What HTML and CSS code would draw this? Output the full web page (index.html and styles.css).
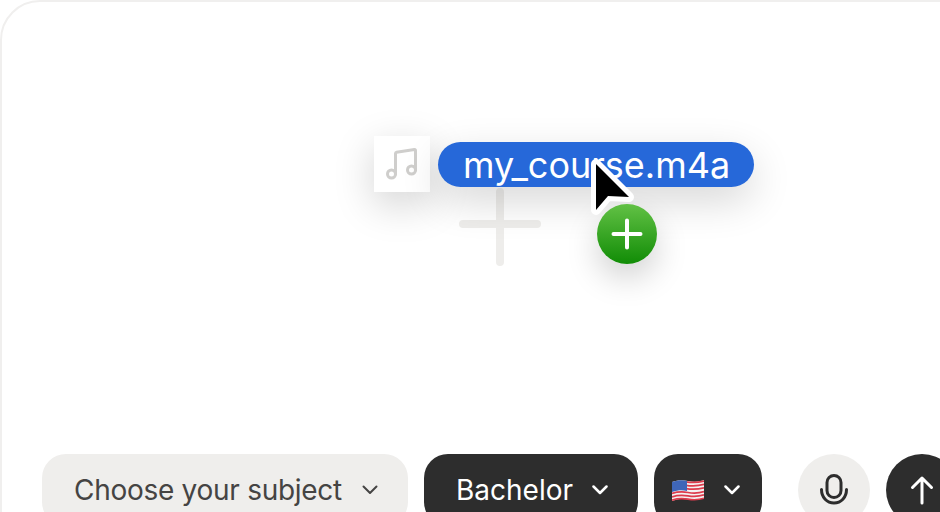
FILE: index.html
```html
<!DOCTYPE html>
<html lang="en">
<head>
	<meta charset="UTF-8">
	<meta name="viewport" content="width=device-width, initial-scale=1.0">
	<link rel="stylesheet" href="styles.css">
	<title>Course upload</title>
</head>
<body>
	<main class="card">
		<div class="toolbar">
			<button class="select select-light select-subject">Choose your subject
				<svg class="chevron" viewBox="0 0 16 10"><path d="M1.5 1.500 8 8l6.500-6.500"/></svg>
			</button>
			<button class="select select-dark select-level">Bachelor
				<svg class="chevron" viewBox="0 0 16 10"><path d="M1.5 1.500 8 8l6.500-6.500"/></svg>
			</button>
			<button class="select select-dark select-lang">
				<svg class="flag" viewBox="0 0 32 24">
					<path fill="#f4f1f1" d="M0 4c6-2 10-2 16-1s10 1 16-1v18c-6 2-10 2-16 1S6 21 0 23z"/>
					<path fill="none" stroke="#dd3b4c" stroke-width="1.700" d="M14 3.900c7 1 11 1 18-.9M14 7.300c7 1 11 1 18-.9M14 10.700c7 1 11 1 18-.9M0 15.500c6-2 10-2 16-1s10 1 16-1M0 18.900c6-2 10-2 16-1s10 1 16-1M0 22.200c6-2 10-2 16-1s10 1 16-1"/>
					<path fill="#3f66b8" d="M0 4c6-2 10-2 15-1.100v10C10 12 6 12 0 14z"/>
				</svg>
				<svg class="chevron" viewBox="0 0 16 10"><path d="M1.500 1.500 8 8l6.500-6.500"/></svg>
			</button>
			<button class="round round-light" aria-label="Record">
				<svg class="icon-mic" viewBox="0 0 28 32"><rect x="7" y="1.500" width="14" height="22" rx="7"/><path d="M1.500 15.500c0 8 5.500 13.500 12.500 13.500s12.500-5.500 12.500-13.500"/></svg>
			</button>
			<button class="round round-dark" aria-label="Send">
				<svg class="icon-up" viewBox="0 0 24 30"><path d="M12 28V3M2.500 12.500 12 3l9.500 9.500"/></svg>
			</button>
		</div>
	</main>

	<!-- drag preview floats above the card -->
	<svg class="drop-plus" viewBox="0 0 82 78"><path d="M4 36h74M41 4v70"/></svg>
	<div class="file-thumb">
		<svg viewBox="0 0 36 36"><circle cx="7.500" cy="28" r="4"/><circle cx="27.500" cy="24" r="4"/><path d="M11.500 28V7.500q0-1 1-1.200L30.500 3.600q1-.2 1 1V24"/></svg>
	</div>
	<div class="file-name">my_course.m4a</div>
	<div class="add-badge">
		<svg viewBox="0 0 32 32"><path d="M2.500 16h27M16 2.500v27"/></svg>
	</div>
	<svg class="cursor" viewBox="0 0 56 72"><path d="M11 12v46l12-14 21 1z"/></svg>
</body>
</html>
```

FILE: styles.css
```css
* {
	box-sizing: border-box;
}

body {
	margin: 0;
	height: 512px;
	overflow: hidden;
	background: #fff;
	font-family: Inter, "Liberation Sans", sans-serif;
}

button {
	border: none;
	font: inherit;
	cursor: pointer;
}

.card {
	display: flex;
	align-items: flex-start;
	width: 1100px;
	height: 620px;
	padding: 452px 0 0 40px;
	background: #fff;
	border: 2px solid #f0efee;
	border-radius: 40px;
}

.toolbar {
	display: flex;
	gap: 16px;
}

.select {
	display: flex;
	align-items: center;
	height: 72px;
	border-radius: 24px;
	font-size: 28px;
	white-space: nowrap;
}
.select-light {
	background: #efeeec;
	color: #454443;
}
.select-dark {
	background: #2d2d2d;
	color: #fff;
}
.select-dark .chevron {
	stroke-width: 2.500;
}
.select-subject {
	width: 366px;
	padding: 0 0 0 32px;
	gap: 20px;
	letter-spacing: -0.28px;
}
.select-level {
	width: 214px;
	padding: 0 0 0 32px;
	gap: 19px;
}
.select-lang {
	width: 108px;
	padding: 0 0 0 18px;
	gap: 20px;
}

.chevron {
	width: 16px;
	height: 10px;
	fill: none;
	stroke: currentColor;
	stroke-width: 2;
	stroke-linecap: round;
	stroke-linejoin: round;
}

.flag {
	width: 32px;
	height: 24px;
}

.round {
	display: flex;
	align-items: center;
	justify-content: center;
	width: 72px;
	height: 72px;
	padding: 0;
	border-radius: 50%;
}
.round-light {
	margin-left: 20px;
	background: #efeeec;
}
.round-dark {
	background: #2d2d2d;
}

.icon-mic {
	width: 28px;
	height: 32px;
	fill: none;
	stroke: #2d2d2d;
	stroke-width: 3;
	stroke-linecap: round;
}
.icon-up {
	width: 24px;
	height: 30px;
	fill: none;
	stroke: #fff;
	stroke-width: 3;
	stroke-linecap: round;
	stroke-linejoin: round;
}

.drop-plus {
	position: absolute;
	left: 459px;
	top: 188px;
	width: 82px;
	height: 78px;
	fill: none;
	stroke: #eeedeb;
	stroke-width: 8;
	stroke-linecap: round;
}

.file-thumb {
	position: absolute;
	left: 374px;
	top: 136px;
	display: flex;
	align-items: center;
	justify-content: center;
	width: 56px;
	height: 56px;
	background: #fff;
	box-shadow: 0 12px 40px rgba(0, 0, 0, 0.18);
}
.file-thumb svg {
	width: 36px;
	height: 36px;
	fill: none;
	stroke: #cfcecc;
	stroke-width: 3;
	stroke-linecap: round;
	stroke-linejoin: round;
}

.file-name {
	position: absolute;
	left: 438px;
	top: 142px;
	width: 316px;
	height: 45px;
	padding-left: 25px;
	background: #2668d9;
	border-radius: 23px;
	color: #fff;
	font-size: 36px;
	line-height: 47px;
	white-space: nowrap;
	box-shadow: 0 14px 40px rgba(0, 0, 0, 0.16);
}

.add-badge {
	position: absolute;
	left: 597px;
	top: 204px;
	display: flex;
	align-items: center;
	justify-content: center;
	width: 60px;
	height: 60px;
	background: linear-gradient(#62c145, #118c06);
	border-radius: 50%;
	box-shadow: 0 14px 32px rgba(0, 0, 0, 0.18);
}
.add-badge svg {
	width: 32px;
	height: 32px;
	fill: none;
	stroke: #fff;
	stroke-width: 4;
	stroke-linecap: round;
}

.cursor {
	position: absolute;
	left: 585px;
	top: 152px;
	width: 56px;
	height: 72px;
	fill: #000;
	stroke: #fff;
	stroke-width: 10;
	stroke-linejoin: round;
	paint-order: stroke;
}
```
